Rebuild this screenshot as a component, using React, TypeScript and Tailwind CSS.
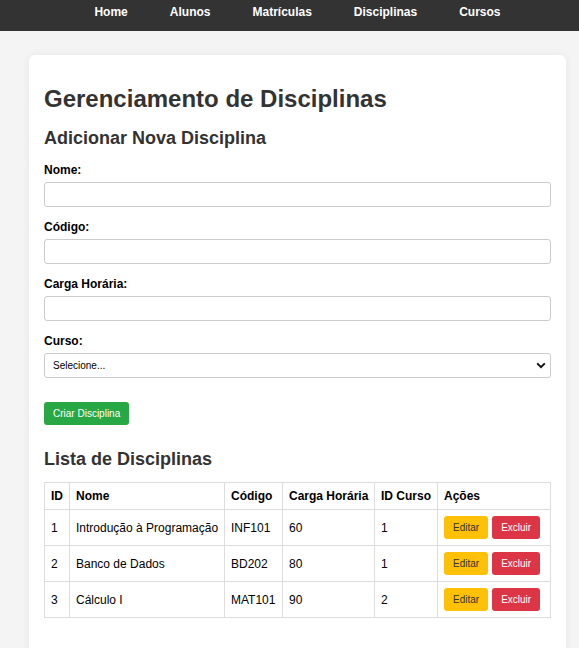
import { useState } from 'react'

type Disciplina = {
  id: number
  nome: string
  codigo: string
  carga: number
  cursoId: number
}

const DISCIPLINAS: Disciplina[] = [
  { id: 1, nome: 'Introdução à Programação', codigo: 'INF101', carga: 60, cursoId: 1 },
  { id: 2, nome: 'Banco de Dados', codigo: 'BD202', carga: 80, cursoId: 1 },
  { id: 3, nome: 'Cálculo I', codigo: 'MAT101', carga: 90, cursoId: 2 },
]

const NAV_LINKS = ['Home', 'Alunos', 'Matrículas', 'Disciplinas', 'Cursos']

const inputClass =
  'block h-[25px] w-full rounded-[3px] border border-[#ccc] bg-white px-[6px] text-[10px] text-black outline-none [font-family:"Liberation_Sans",Arial,sans-serif]'

function Field({ label, value, onChange }: { label: string; value: string; onChange: (v: string) => void }) {
  return (
    <div className="mb-[13px]">
      <label className="mb-[5px] block text-[12px] leading-[14px] font-bold text-black">{label}</label>
      <input className={inputClass} value={value} onChange={(e) => onChange(e.target.value)} />
    </div>
  )
}

export default function App() {
  const [nome, setNome] = useState('')
  const [codigo, setCodigo] = useState('')
  const [carga, setCarga] = useState('')

  return (
    <div className='min-h-screen w-full overflow-x-hidden bg-[#f4f4f4] text-[12px] text-black [font-family:"Liberation_Sans",Arial,sans-serif]'>
      <div className="w-[595px]">
        <nav className="flex h-[31px] justify-center gap-[42px] bg-[#333] pt-[5px]">
          {NAV_LINKS.map((link) => (
            <a key={link} href="#" className="text-[12px] leading-[14px] font-bold text-white no-underline">
              {link}
            </a>
          ))}
        </nav>

        <main className="mx-auto mt-[24px] w-[537px] rounded-[6px] bg-white px-[15px] pt-[15px] pb-[45px] shadow-[0_0_8px_rgba(0,0,0,0.06)]">
          <h1 className="mt-[15px] text-[24px] leading-[28px] font-bold text-[#333]">Gerenciamento de Disciplinas</h1>
          <h2 className="mt-[15px] mb-[14px] text-[18px] leading-[21px] font-bold text-[#333]">
            Adicionar Nova Disciplina
          </h2>

          <form onSubmit={(e) => e.preventDefault()}>
            <Field label="Nome:" value={nome} onChange={setNome} />
            <Field label="Código:" value={codigo} onChange={setCodigo} />
            <Field label="Carga Horária:" value={carga} onChange={setCarga} />

            <div>
              <label className="mb-[5px] block text-[12px] leading-[14px] font-bold text-black">Curso:</label>
              <div className="relative">
                <select className={`${inputClass} appearance-none pl-[8px]`} defaultValue="">
                  <option value="">Selecione...</option>
                  <option value="1">Ciência da Computação</option>
                  <option value="2">Engenharia</option>
                </select>
                <svg
                  className="pointer-events-none absolute top-[9px] right-[5px] h-[7px] w-[10px]"
                  viewBox="0 0 10 7"
                  fill="none"
                >
                  <path d="M1.2 1.4 5 5.2 8.8 1.4" stroke="#111" strokeWidth="2" />
                </svg>
              </div>
            </div>

            <button
              type="submit"
              className='mt-[24px] h-[23px] rounded-[3px] bg-[#28a745] px-[9px] text-[10px] leading-[11px] text-white [font-family:"Liberation_Sans",Arial,sans-serif]'
            >
              Criar Disciplina
            </button>
          </form>

          <h2 className="mt-[24px] mb-[12px] text-[18px] leading-[21px] font-bold text-[#333]">Lista de Disciplinas</h2>

          <table className="w-full table-fixed border-collapse text-left text-[12px] leading-[14px] text-black">
            <colgroup>
              <col className="w-[25px]" />
              <col className="w-[155px]" />
              <col className="w-[58px]" />
              <col className="w-[92px]" />
              <col className="w-[63px]" />
              <col />
            </colgroup>
            <thead>
              <tr>
                {['ID', 'Nome', 'Código', 'Carga Horária', 'ID Curso', 'Ações'].map((h) => (
                  <th key={h} className="border border-[#ddd] p-[6px] font-bold whitespace-nowrap">
                    {h}
                  </th>
                ))}
              </tr>
            </thead>
            <tbody>
              {DISCIPLINAS.map((d) => (
                <tr key={d.id}>
                  <td className="border border-[#ddd] p-[6px]">{d.id}</td>
                  <td className="border border-[#ddd] p-[6px] whitespace-nowrap">{d.nome}</td>
                  <td className="border border-[#ddd] p-[6px]">{d.codigo}</td>
                  <td className="border border-[#ddd] p-[6px]">{d.carga}</td>
                  <td className="border border-[#ddd] p-[6px]">{d.cursoId}</td>
                  <td className="border border-[#ddd] p-[6px]">
                    <div className="flex gap-[4px]">
                      <button className='h-[23px] rounded-[3px] bg-[#ffc107] px-[9px] text-[10px] leading-[11px] text-[#333] [font-family:"Liberation_Sans",Arial,sans-serif]'>
                        Editar
                      </button>
                      <button className='h-[23px] rounded-[3px] bg-[#dc3545] px-[9px] text-[10px] leading-[11px] text-white [font-family:"Liberation_Sans",Arial,sans-serif]'>
                        Excluir
                      </button>
                    </div>
                  </td>
                </tr>
              ))}
            </tbody>
          </table>
        </main>
      </div>
    </div>
  )
}
